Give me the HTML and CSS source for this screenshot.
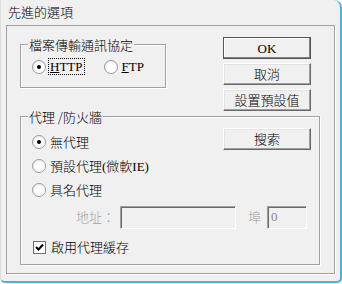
FILE: index.html
```html
<!DOCTYPE html>
<html lang="zh-Hant">
<head>
  <meta charset="UTF-8" />
  <title>先進的選項</title>
  <link rel="stylesheet" href="styles.css">
</head>
<body>
  <div class="window">
    <div class="titlebar">先進的選項</div>

    <div class="client">
      <div class="top-row">
        <div class="group group-protocol">
          <span class="group-label">檔案傳輸通訊協定</span>
          <div class="option-row">
            <label class="option"><span class="radio checked"></span><span class="text-box focus"><u>H</u>TTP</span></label>
            <label class="option option-ftp"><span class="radio"></span><span class="text-box"><u>F</u>TP</span></label>
          </div>
        </div>

        <div class="buttons">
          <button class="btn btn-default">OK</button>
          <button class="btn">取消</button>
          <button class="btn">設置預設值</button>
        </div>
      </div>

      <div class="group group-proxy">
        <span class="group-label">代理 /防火牆</span>

        <div class="proxy-top">
          <div class="proxy-options">
            <label class="option"><span class="radio checked"></span>無代理</label>
            <label class="option"><span class="radio"></span>預設代理(微軟IE)</label>
            <label class="option"><span class="radio"></span>具名代理</label>
          </div>
          <button class="btn">搜索</button>
        </div>

        <div class="address-row">
          <span class="disabled-label">地址：</span>
          <span class="textbox textbox-address"></span>
          <span class="disabled-label port-label">埠</span>
          <span class="textbox textbox-port">0</span>
        </div>

        <label class="option check-row">
          <span class="checkbox">
            <svg width="11" height="11" viewBox="0 0 11 11"><path d="M2 5 L4.5 7.5 L9 2.5" fill="none" stroke="#000" stroke-width="2"/></svg>
          </span>啟用代理緩存
        </label>
      </div>
    </div>
  </div>
</body>
</html>
```

FILE: styles.css
```css
body {
  margin: 0;
  background: #fff;
}

.window {
  width: 342px;
  height: 283px;
  box-sizing: border-box;
  background: #f0f0f0;
  border-left: 1px solid #dcdcdc;
  border-right: 2px solid #3cb9de;
  border-bottom: 2px solid #3cb9de;
  border-radius: 0 8px 5px 5px;
  font: 300 13px/15px "Liberation Serif", "Noto Sans CJK TC", serif;
  color: #000;
}

.titlebar {
  height: 25px;
  box-sizing: border-box;
  padding: 5px 0 0 7px;
}

.client {
  margin-left: 5px;
  width: 329px;
  height: 249px;
  box-sizing: border-box;
  border: 1px solid #a0a0a0;
  box-shadow: 1px 1px 0 #fff;
  display: flex;
  flex-direction: column;
}

.top-row {
  display: flex;
  align-items: flex-start;
  padding: 0 23px 0 13px;
}

.group {
  position: relative;
  box-sizing: border-box;
  border: 1px solid #a0a0a0;
  box-shadow: inset 1px 1px 0 #fff, 1px 1px 0 #fff;
}

.group-label {
  position: absolute;
  top: -8px;
  left: 7px;
  padding: 0 1px;
  background: #f0f0f0;
  font-family: "Noto Sans CJK TC", sans-serif;
}

.group-protocol {
  width: 146px;
  height: 44px;
  margin-top: 18px;
  padding: 10px 0 0 11px;
}

.option-row {
  display: flex;
}

.option {
  display: flex;
  align-items: center;
  height: 23px;
}

.option-ftp {
  margin-left: 19px;
}

.radio {
  position: relative;
  width: 12px;
  height: 12px;
  margin-right: 4px;
  border: 1px solid #9a9a9a;
  border-radius: 50%;
  background: radial-gradient(circle at 60% 60%, #fff 45%, #dedede);
  flex-shrink: 0;
}

.radio.checked::after {
  content: "";
  position: absolute;
  left: 4px;
  top: 4px;
  width: 4px;
  height: 4px;
  border-radius: 50%;
  background: #000;
}

.text-box {
  margin-left: -2px;
  padding: 0 1px;
  border: 1px dotted transparent;
}

.focus {
  border-color: #000;
}

.buttons {
  margin-left: auto;
  margin-top: 11px;
  display: flex;
  flex-direction: column;
  gap: 4px;
}

.btn {
  width: 88px;
  height: 22px;
  box-sizing: border-box;
  padding: 0;
  background: #f0f0f0;
  font: inherit;
  color: #000;
  border: 1px solid;
  border-color: #fff #696969 #696969 #fff;
  box-shadow: inset -1px -1px 0 #a0a0a0, inset 1px 1px 0 #e3e3e3;
}

.btn-default {
  border-color: #555;
  box-shadow: inset -1px -1px 0 #808080, inset 1px 1px 0 #fff;
}

.group-proxy {
  width: 300px;
  height: 149px;
  margin: 5px 0 0 13px;
  padding: 11px 8px 0 11px;
}

.proxy-top {
  display: flex;
  justify-content: space-between;
  align-items: flex-start;
}

.proxy-options {
  margin-top: 2px;
}

.proxy-options .option {
  height: 24px;
}

.address-row {
  display: flex;
  align-items: center;
  margin: 4px 0 0 44px;
}

.disabled-label {
  color: #a0a0a0;
  margin-right: 5px;
}

.port-label {
  margin-left: 12px;
  margin-right: 6px;
}

.textbox {
  height: 23px;
  box-sizing: border-box;
  border: 1px solid;
  border-color: #a0a0a0 #fff #fff #a0a0a0;
  box-shadow: inset 1px 1px 0 #696969;
  color: #8a8a8a;
  padding: 2px 0 0 3px;
}

.textbox-address {
  width: 116px;
}

.textbox-port {
  width: 40px;
}

.check-row {
  margin-top: 7px;
}

.checkbox {
  width: 11px;
  height: 11px;
  margin: 0 5px 0 1px;
  border: 1px solid #707070;
  background: #fff;
  display: flex;
  align-items: center;
  justify-content: center;
}
```
